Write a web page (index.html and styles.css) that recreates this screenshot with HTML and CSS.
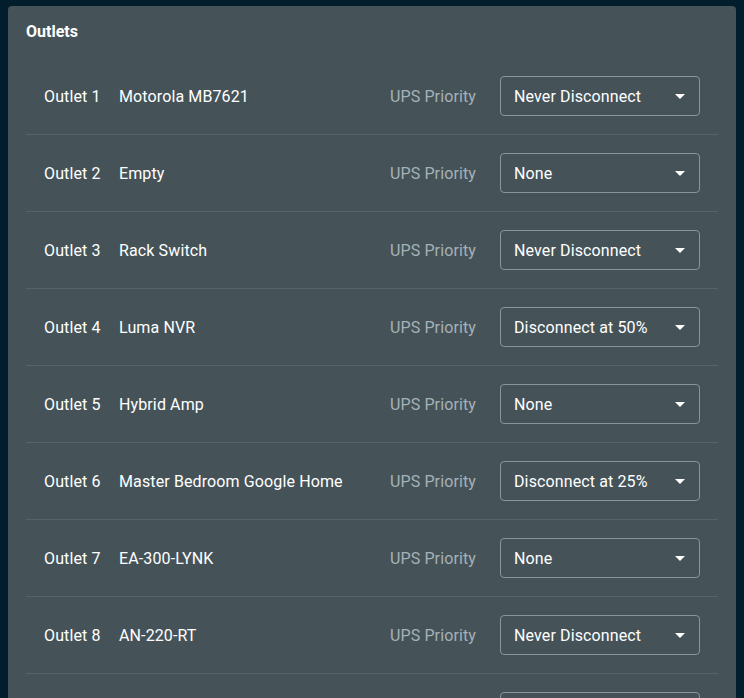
FILE: index.html
```html
<!DOCTYPE html>
<html lang="en">
<head>
<meta charset="utf-8">
<title>Outlets</title>
<link rel="stylesheet" href="styles.css">
</head>
<body>
<section class="card">
  <h2 class="card-title">Outlets</h2>
  <div class="rows">
    <div class="row"><span class="outlet">Outlet 1</span><span class="name">Motorola MB7621</span><span class="label">UPS Priority</span><div class="select"><span>Never Disconnect</span><i class="caret"></i></div></div>
    <div class="row"><span class="outlet">Outlet 2</span><span class="name">Empty</span><span class="label">UPS Priority</span><div class="select"><span>None</span><i class="caret"></i></div></div>
    <div class="row"><span class="outlet">Outlet 3</span><span class="name">Rack Switch</span><span class="label">UPS Priority</span><div class="select"><span>Never Disconnect</span><i class="caret"></i></div></div>
    <div class="row"><span class="outlet">Outlet 4</span><span class="name">Luma NVR</span><span class="label">UPS Priority</span><div class="select"><span>Disconnect at 50%</span><i class="caret"></i></div></div>
    <div class="row"><span class="outlet">Outlet 5</span><span class="name">Hybrid Amp</span><span class="label">UPS Priority</span><div class="select"><span>None</span><i class="caret"></i></div></div>
    <div class="row"><span class="outlet">Outlet 6</span><span class="name">Master Bedroom Google Home</span><span class="label">UPS Priority</span><div class="select"><span>Disconnect at 25%</span><i class="caret"></i></div></div>
    <div class="row"><span class="outlet">Outlet 7</span><span class="name">EA-300-LYNK</span><span class="label">UPS Priority</span><div class="select"><span>None</span><i class="caret"></i></div></div>
    <div class="row"><span class="outlet">Outlet 8</span><span class="name">AN-220-RT</span><span class="label">UPS Priority</span><div class="select"><span>Never Disconnect</span><i class="caret"></i></div></div>
    <div class="row"><span class="outlet">Outlet 9</span><span class="name">Empty</span><span class="label">UPS Priority</span><div class="select"><span>None</span><i class="caret"></i></div></div>
  </div>
</section>
</body>
</html>
```
FILE: styles.css
```css
html, body {
  margin: 0;
  padding: 0;
  overflow: hidden;
}
body {
  background: #021d2c;
  font-family: Roboto, "Liberation Sans", sans-serif;
  color: #ffffff;
  padding: 6px 8px 0 8px;
}
.card {
  background: #455359;
  border-radius: 4px;
  padding: 15px 18px 0 18px;
}
.card-title {
  margin: 0;
  font-size: 16px;
  font-weight: 700;
  line-height: 22px;
  height: 37px;
}
.row {
  display: flex;
  align-items: center;
  padding: 18px 18px;
  border-bottom: 1px solid #56636a;
  font-size: 16px;
  line-height: 20px;
  letter-spacing: 0.12px;
}
.outlet,
.name,
.label,
.select span {
  padding-top: 2px;
}
.outlet {
  width: 75px;
  flex: none;
}
.name {
  flex: 1;
}
.label {
  color: #a6b1b6;
  margin-right: 24px;
}
.select {
  box-sizing: border-box;
  width: 200px;
  height: 40px;
  border: 1px solid #8a9499;
  border-radius: 4px;
  display: flex;
  align-items: center;
  justify-content: space-between;
  padding: 0 14px 0 13px;
}
.caret {
  width: 0;
  height: 0;
  border-left: 5px solid transparent;
  border-right: 5px solid transparent;
  border-top: 5px solid #ffffff;
}
```
